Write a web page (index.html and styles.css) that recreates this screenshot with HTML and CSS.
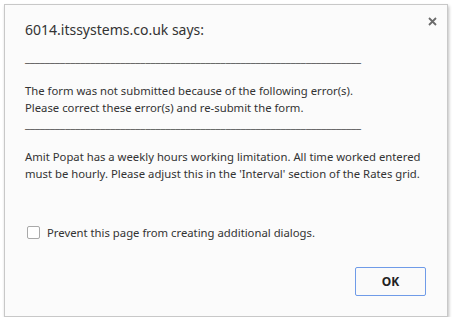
FILE: index.html
```html
<!DOCTYPE html>
<html lang="en">
<head>
    <meta charset="UTF-8">
    <title>6014.itssystems.co.uk says:</title>
    <link rel="stylesheet" href="styles.css">
</head>
<body>
    <div class="dialog">
        <button class="close" aria-label="Close">
            <svg width="9" height="9" viewBox="0 0 9 9"><path d="M1 1L8 8M8 1L1 8" stroke="#6b6b6b" stroke-width="1.8"/></svg>
        </button>
        <h1 class="dialog-title">6014.itssystems.co.uk says:</h1>

        <div class="message">
            <p class="rule">___________________________________________________________________</p>
            <p>The form was not submitted because of the following error(s).<br>Please correct these error(s) and re-submit the form.</p>
            <p class="rule">___________________________________________________________________</p>
            <p>Amit Popat has a weekly hours working limitation. All time worked entered must be hourly. Please adjust this in the 'Interval' section of the Rates grid.</p>
        </div>

        <label class="suppress">
            <span class="box"></span>
            Prevent this page from creating additional dialogs.
        </label>

        <div class="buttons">
            <button class="ok">OK</button>
        </div>
    </div>
</body>
</html>
```

FILE: styles.css
```css
body {
    margin: 0;
    background: #fff;
    font-family: 'Noto Sans', 'Open Sans', sans-serif;
    color: #222;
}

/* Caixa do alerta */
.dialog {
    position: relative;
    margin: 4px 0 0 4px;
    width: 444px;
    height: 313px;
    box-sizing: border-box;
    background: #fbfbfb;
    border: 1px solid #c8c8c8;
    box-shadow: 1px 2px 3px rgba(0,0,0,0.25);
    padding: 16px 20px 0 20px;
}

.close {
    position: absolute;
    top: 10px;
    right: 8px;
    border: none;
    background: none;
    padding: 2px;
    line-height: 0;
    cursor: pointer;
}

.dialog-title {
    margin: 0;
    font-size: 14px;
    font-weight: normal;
    color: #333;
    line-height: 18px;
}

.message {
    margin-top: 11px;
    font-size: 11.3px;
    line-height: 16.5px;
    color: #333;
    width: 404px;
}

.message p {
    margin: 0;
}

.message .rule {
    white-space: nowrap;
    color: #3a3a3a;
    margin-bottom: 16.5px;
}

.suppress {
    display: flex;
    align-items: center;
    gap: 7px;
    margin-top: 42px;
    margin-left: 2px;
    height: 16px;
    font-size: 11.3px;
    color: #333;
}

.box {
    width: 11px;
    height: 11px;
    border: 1px solid #a9a9a9;
    border-radius: 2px;
    background: #fff;
}

.buttons {
    display: flex;
    justify-content: flex-end;
    margin-top: 27px;
    padding-right: 1px;
}

.ok {
    width: 71px;
    height: 29px;
    background: #fafafa;
    border: 1px solid #6f9be8;
    border-radius: 2px;
    font-family: 'Noto Sans', sans-serif;
    font-size: 12px;
    font-weight: bold;
    color: #222;
}
```
